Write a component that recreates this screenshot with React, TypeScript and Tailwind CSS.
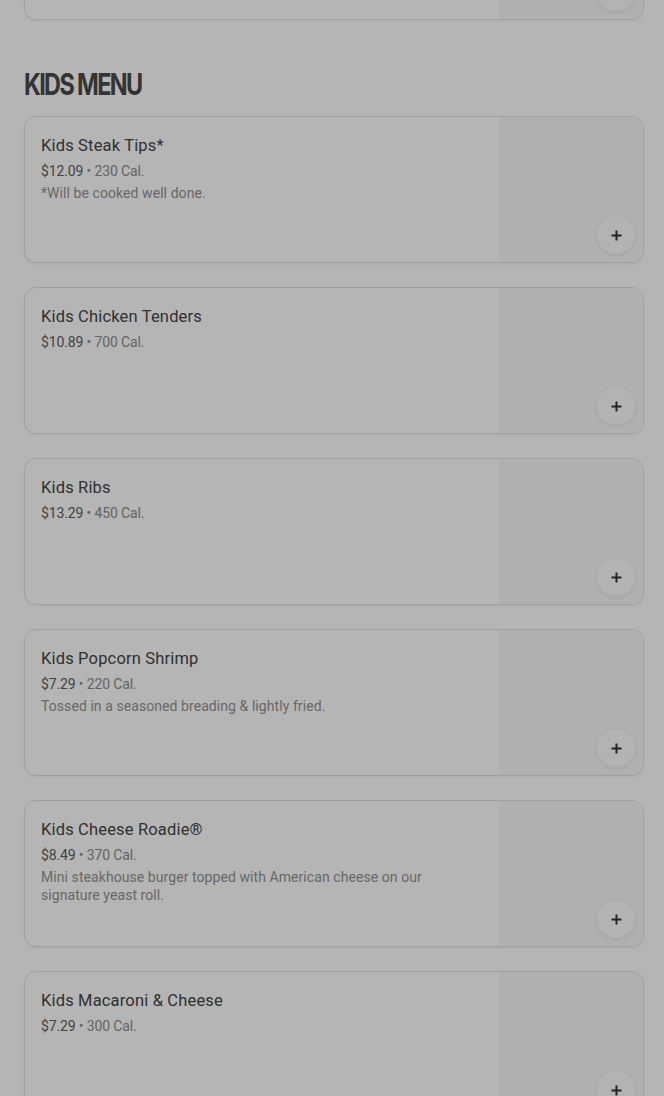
import React from 'react';

type Item = {
  name: string;
  price: string;
  cal: string;
  description?: string;
};

const kidsMenu: Item[] = [
  { name: 'Kids Steak Tips*', price: '$12.09', cal: '230 Cal.', description: '*Will be cooked well done.' },
  { name: 'Kids Chicken Tenders', price: '$10.89', cal: '700 Cal.' },
  { name: 'Kids Ribs', price: '$13.29', cal: '450 Cal.' },
  { name: 'Kids Popcorn Shrimp', price: '$7.29', cal: '220 Cal.', description: 'Tossed in a seasoned breading & lightly fried.' },
  {
    name: 'Kids Cheese Roadie®',
    price: '$8.49',
    cal: '370 Cal.',
    description: 'Mini steakhouse burger topped with American cheese on our signature yeast roll.',
  },
  { name: 'Kids Macaroni & Cheese', price: '$7.29', cal: '300 Cal.' },
];

const PlusIcon = () => (
  <svg width="13" height="13" viewBox="0 0 13 13" fill="none">
    <path d="M6.5 1.5v10M1.5 6.5h10" stroke="#333" strokeWidth="2" />
  </svg>
);

const MenuCard: React.FC<{ item?: Item }> = ({ item }) => {
  return (
    <div className="relative flex h-[147px] overflow-hidden rounded-xl border border-[#e3e3e3] bg-white shadow-[0_2px_2px_rgba(0,0,0,0.04)]">
      <div className="flex-1 px-4 pt-[17px]">
        {item && (
          <>
            <h3 className="text-[16.5px] leading-6 font-normal tracking-[0.01em] text-[#454545]">{item.name}</h3>
            <p className="mt-[3px] text-[14px] leading-5 tracking-[-0.01em]">
              <span className="text-[#606060]">{item.price}</span>
              <span className="text-[#8e8e8e]"> • {item.cal}</span>
            </p>
            {item.description && (
              <p className="mt-[3px] max-w-[430px] text-[14px] leading-[18px] tracking-[0.005em] text-[#939393]">
                {item.description}
              </p>
            )}
          </>
        )}
      </div>
      <div className="w-[143px] shrink-0 border-l border-[#f1f1f1] bg-[#f8f8f8]" />
      <button className="absolute right-2 bottom-2 flex h-[38px] w-[38px] items-center justify-center rounded-full bg-[#fdfdfd] shadow-[0_1px_5px_rgba(0,0,0,0.09)]">
        <PlusIcon />
      </button>
    </div>
  );
};

export default function App() {
  return (
    <div className="relative min-h-screen overflow-hidden bg-white font-['Roboto',sans-serif]">
      <div className="pl-6 pr-5">
        {/* tail of the previous section */}
        <div className="-mt-[127px]">
          <MenuCard />
        </div>

        <h2 className="mt-[44px] origin-left scale-x-[0.78] font-['Inter',sans-serif] text-[30px] leading-[40px] font-bold tracking-[-0.07em] text-[#4a4a4a] uppercase">
          Kids Menu
        </h2>

        <div className="mt-[12px] flex flex-col gap-6 pb-10">
          {kidsMenu.map((item, i) => (
            <MenuCard key={i} item={item} />
          ))}
        </div>
      </div>

      {/* modal backdrop */}
      <div className="fixed inset-0 bg-black/[0.29]" />
    </div>
  );
}
